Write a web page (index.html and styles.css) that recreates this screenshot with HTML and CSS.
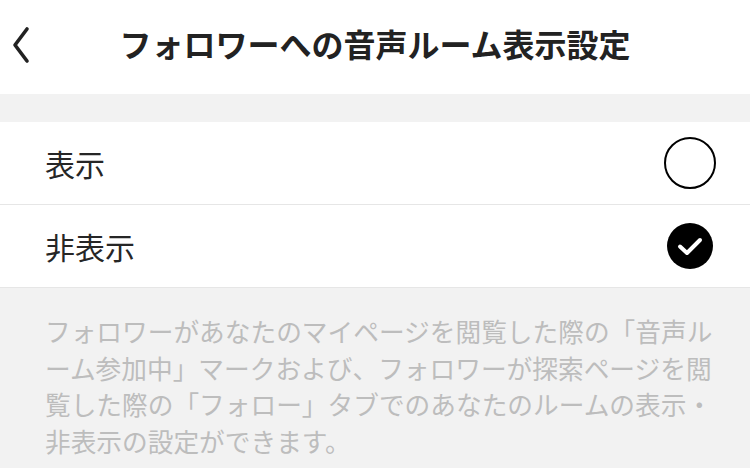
FILE: index.html
```html
<!DOCTYPE html>
<html lang="ja">
<head>
  <meta charset="UTF-8" />
  <title>フォロワーへの音声ルーム表示設定</title>
  <link rel="stylesheet" href="styles.css">
</head>
<body>
  <header class="top-bar">
    <button class="back-btn" aria-label="戻る">
      <svg width="20" height="40" viewBox="0 0 20 40">
        <polyline points="16,3 4,19 16,35" fill="none" stroke="#222" stroke-width="3.6" stroke-linecap="round" stroke-linejoin="round" />
      </svg>
    </button>
    <h1>フォロワーへの音声ルーム表示設定</h1>
  </header>

  <div class="spacer"></div>

  <ul class="options">
    <li class="option">
      <span>表示</span>
      <span class="radio"></span>
    </li>
    <li class="option">
      <span>非表示</span>
      <span class="radio checked">
        <svg width="46" height="46" viewBox="0 0 46 46">
          <circle cx="23" cy="23" r="23" fill="#000" />
          <polyline points="13,23.5 20,30 33,17" fill="none" stroke="#fff" stroke-width="4" stroke-linecap="round" stroke-linejoin="round" />
        </svg>
      </span>
    </li>
  </ul>

  <p class="note">フォロワーがあなたのマイページを閲覧した際の「音声ルーム参加中」マークおよび、フォロワーが探索ページを閲覧した際の「フォロー」タブでのあなたのルームの表示・非表示の設定ができます。</p>
</body>
</html>
```

FILE: styles.css
```css
html, body {
  margin: 0;
  height: 100%;
}

body {
  font-family: 'Noto Sans CJK JP', 'Noto Sans', sans-serif;
  background: #f2f2f2;
  color: #222;
}

.top-bar {
  height: 94px;
  box-sizing: border-box;
  padding-bottom: 8px;
  background: #fff;
  display: flex;
  align-items: center;
  justify-content: center;
  position: relative;
}

.back-btn {
  position: absolute;
  left: 11px;
  top: 26px;
  padding: 0;
  border: none;
  background: none;
  display: flex;
}

h1 {
  margin: 0;
  font-size: 32px;
  font-weight: 700;
  color: #222;
  line-height: 1;
}

.spacer {
  height: 28px;
}

.options {
  list-style: none;
  margin: 0;
  padding: 0;
  background: #fff;
}

.option {
  height: 82px;
  border-bottom: 1px solid #e6e6e6;
  display: flex;
  align-items: center;
  justify-content: space-between;
  padding: 0 34px 0 45px;
  font-size: 30px;
  color: #262626;
}

.radio {
  width: 48px;
  height: 48px;
  border: 2px solid #000;
  border-radius: 50%;
  display: flex;
  align-items: center;
  justify-content: center;
}

.radio.checked {
  border-color: transparent;
}

.note {
  margin: 0;
  padding: 25px 30px 0 45px;
  font-size: 25.7px;
  line-height: 36.5px;
  color: #bdbdbd;
}
```
